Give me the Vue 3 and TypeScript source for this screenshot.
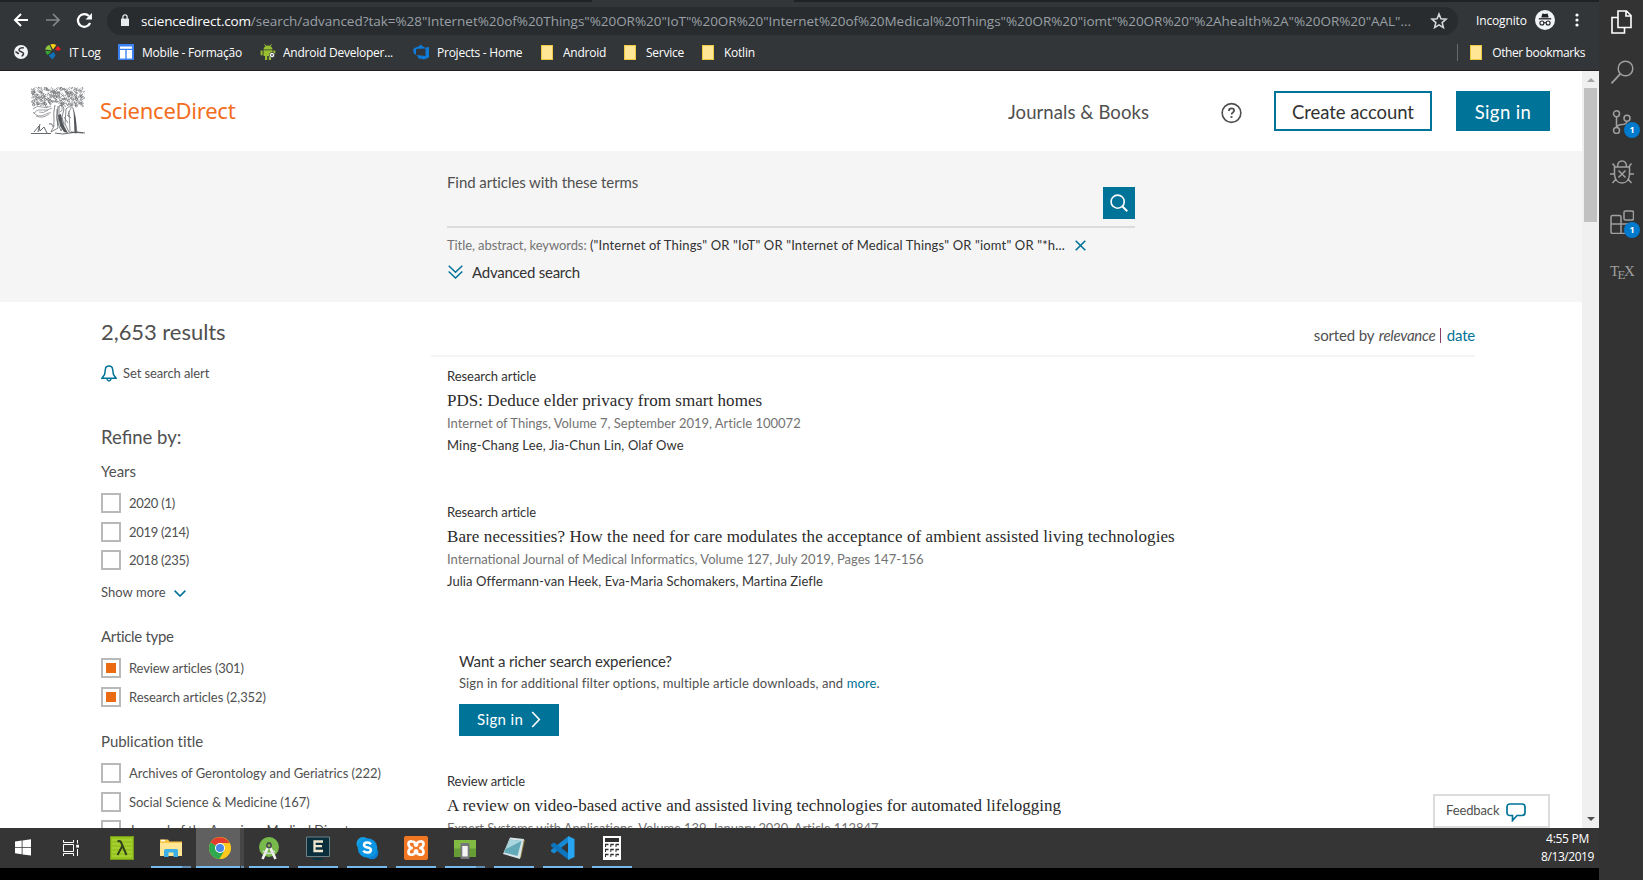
<script setup lang="ts">
interface Tracked { text: string; ls?: number }
interface Result { kind: Tracked; title: Tracked; source: Tracked; authors: Tracked }
interface Facet { title: Tracked; checked: boolean; more: boolean; options: Tracked[] }
interface Task { name: string; state: string }

const track = (ls = 0) => ({ letterSpacing: `${ls}px` })

const bookmarks = [
  { name: 'globe', label: '', cls: 'bm-globe' },
  { name: 'itlog', label: 'IT Log', cls: 'bm-itlog' },
  { name: 'mobile', label: 'Mobile - Formação', cls: 'bm-mobile' },
  { name: 'droid', label: 'Android Developer...', cls: 'bm-droid' },
  { name: 'azure', label: 'Projects - Home', cls: 'bm-azure' },
  { name: 'folder', label: 'Android', cls: 'bm-android' },
  { name: 'folder', label: 'Service', cls: 'bm-service' },
  { name: 'folder', label: 'Kotlin', cls: 'bm-kotlin' },
]

const results: Result[] = [
  {
    kind: { text: 'Research article', ls: -0.05 },
    title: { text: 'PDS: Deduce elder privacy from smart homes', ls: 0.04 },
    source: { text: 'Internet of Things, Volume 7, September 2019, Article 100072', ls: -0.01 },
    authors: { text: 'Ming-Chang Lee, Jia-Chun Lin, Olaf Owe', ls: 0.15 },
  },
  {
    kind: { text: 'Research article', ls: -0.05 },
    title: { text: 'Bare necessities? How the need for care modulates the acceptance of ambient assisted living technologies', ls: 0.09 },
    source: { text: 'International Journal of Medical Informatics, Volume 127, July 2019, Pages 147-156' },
    authors: { text: 'Julia Offermann-van Heek, Eva-Maria Schomakers, Martina Ziefle', ls: 0.07 },
  },
]
const lastResult = {
  kind: { text: 'Review article', ls: -0.1 },
  title: { text: 'A review on video-based active and assisted living technologies for automated lifelogging', ls: 0.02 },
  source: { text: 'Expert Systems with Applications, Volume 139, January 2020, Article 112847', ls: -0.1 },
}

const facets: Facet[] = [
  {
    title: { text: 'Years' }, checked: false, more: true,
    options: [{ text: '2020 (1)', ls: -0.25 }, { text: '2019 (214)', ls: -0.32 }, { text: '2018 (235)', ls: -0.32 }],
  },
  {
    title: { text: 'Article type', ls: -0.32 }, checked: true, more: false,
    options: [{ text: 'Review articles (301)', ls: -0.15 }, { text: 'Research articles (2,352)', ls: -0.08 }],
  },
  {
    title: { text: 'Publication title', ls: -0.04 }, checked: false, more: false,
    options: [
      { text: 'Archives of Gerontology and Geriatrics (222)', ls: -0.03 },
      { text: 'Social Science & Medicine (167)', ls: -0.02 },
      { text: 'Journal of the American Medical Directors', ls: -0.05 },
    ],
  },
]

const tasks: Task[] = [
  { name: 'explorer', state: 'split' },
  { name: 'chrome', state: 'active' },
  { name: 'studio', state: 'open' },
  { name: 'cmder', state: 'open' },
  { name: 'skype', state: 'open' },
  { name: 'xampp', state: 'open' },
  { name: 'genymotion', state: 'split' },
  { name: 'notepad', state: 'open' },
  { name: 'vscode', state: 'open' },
  { name: 'calc', state: 'open' },
]

// Engraved foliage of the publisher's tree: small curls laid out with a fixed seed.
let seed = 11
const rnd = () => {
  seed = (seed * 16807) % 2147483647
  return seed / 2147483647
}
const curls: string[] = []
for (let y = 1.5; y < 19; y += 2.3) {
  for (let x = 1.5; x < 53; x += 2.5) {
    if (y > 16 && x > 20 && x < 27) continue
    const px = x + rnd() * 1.6 - 0.8
    const py = y + rnd() * 1.4 - 0.7
    const r = 0.7 + rnd() * 0.7
    const s = rnd() > 0.5 ? 1 : 0
    curls.push(`M${px.toFixed(1)} ${py.toFixed(1)}a${r.toFixed(1)} ${r.toFixed(1)} 0 1 ${s} ${(rnd() * 1.6).toFixed(1)} ${(rnd() * 1.2).toFixed(1)}`)
  }
}
const foliage = curls.join('')
</script>

<template>
  <div class="screen">
    <div class="desktop">
      <div class="browser">
        <div class="tabstrip"><i class="tab-l"></i><i class="tab-gap"></i></div>
        <div class="toolbar">
          <svg class="nav back" viewBox="0 0 16 16"><path d="M15 8H2M8 2L2 8l6 6" fill="none" stroke="#fff" stroke-width="2" /></svg>
          <svg class="nav fwd" viewBox="0 0 16 16"><path d="M1 8h13M8 2l6 6-6 6" fill="none" stroke="#85888b" stroke-width="1.7" /></svg>
          <svg class="nav reload" viewBox="0 0 16 16"><path d="M13.3 10.4A6 6 0 1 1 12.2 3.8" fill="none" stroke="#fff" stroke-width="2.1" /><path d="M15 1v6H9z" fill="#fff" /></svg>
          <div class="omnibox">
            <svg class="lock" viewBox="0 0 10 12"><path d="M1 4.6h8V12H1z" fill="#e8eaed" /><path d="M2.9 5V3a2.1 2.1 0 0 1 4.2 0v2" fill="none" stroke="#e8eaed" stroke-width="1.3" /></svg>
            <span class="host">sciencedirect.com</span><span class="path">/search/advanced?tak=%28"Internet%20of%20Things"%20OR%20"IoT"%20OR%20"Internet%20of%20Medical%20Things"%20OR%20"iomt"%20OR%20"%2Ahealth%2A"%20OR%20"AAL"...</span>
            <svg class="star" viewBox="0 0 16 16"><path d="M8 1.8l1.7 4.3 4.6.3-3.5 3 1.1 4.5L8 11.4l-3.9 2.5 1.1-4.5-3.5-3 4.6-.3z" fill="none" stroke="#d5d7da" stroke-width="1.4" /></svg>
          </div>
          <span class="incog">Incognito</span>
          <svg class="spy" viewBox="0 0 20 20"><circle cx="10" cy="10" r="10" fill="#f1f3f4" /><path d="M6.3 7.4L7.4 3.6l2.6.5 2.6-.5 1.1 3.8z" fill="#202124" /><path d="M3.8 8.8h12.4" stroke="#202124" stroke-width="1.3" /><circle cx="6.9" cy="13" r="2" fill="none" stroke="#202124" stroke-width="1.1" /><circle cx="13.1" cy="13" r="2" fill="none" stroke="#202124" stroke-width="1.1" /><path d="M8.9 12.7h2.2" stroke="#202124" /></svg>
          <svg class="dots" viewBox="0 0 4 14"><circle cx="2" cy="2" r="1.6" fill="#fff" /><circle cx="2" cy="7" r="1.6" fill="#fff" /><circle cx="2" cy="12" r="1.6" fill="#fff" /></svg>
        </div>
        <div class="bookmarks">
          <div v-for="b in bookmarks" :key="b.cls" class="bm" :class="b.cls">
            <svg v-if="b.name === 'globe'" class="i14" viewBox="0 0 14 14"><circle cx="7" cy="7" r="7" fill="#f1f3f4" /><path d="M9.8 3C7.500 2.300 4.800 3.300 5 5.200c.3 1.800 4.500 1.300 4.500 3.500 0 1.300-1.300 1.500-1.500 2.800M1.500 6.500c1 1 2.300 1.300 3.200 2.500" fill="none" stroke="#35363a" stroke-width="1.6" /></svg>
            <svg v-else-if="b.name === 'itlog'" class="i16" viewBox="0 0 16 16"><path d="M7 6.500L0 5.500A7 7 0 0 1 4.300.800z" fill="#8cc63e" /><path d="M8 5.500L5.300.500a8 8 0 0 1 6 .5z" fill="#fcd116" /><path d="M10 6l2.300-4q2.700 1.300 3.700 3.500l-2.500 1.200z" fill="#e01b22" /><path d="M6.500 7.500L.5 6.800q0 2.500 2 4.300z" fill="#38a832" /><path d="M8.800 8L3.500 11.500 7.500 15.500l3-4z" fill="#1071b8" /></svg>
            <svg v-else-if="b.name === 'mobile'" class="i16" viewBox="0 0 16 16"><path d="M0 0h16v16H0z" fill="#3b82f0" /><path d="M2 2.500h12v2.300H2zM2 6h5.300v8.500H2zM8.700 6H14v8.500H8.700z" fill="#fff" /></svg>
            <svg v-else-if="b.name === 'droid'" class="i16" viewBox="0 0 16 16"><path d="M3.500 5.500a4.500 4 0 0 1 9 0zM3.500 6.300h9V12h-9zM.6 6.500h2v4.800h-2zM13.300 6.500h2v3h-2zM5 12h2.200v4H5zM8.800 12H11v4H8.800z" fill="#97bf30" /><path d="M4.500.3l1.500 2M11.500.3l-1.500 2" stroke="#97bf30" /><circle cx="12" cy="11" r="2.600" fill="#fff" stroke="#333" stroke-width=".7" /><circle cx="12" cy="11" r="1" fill="#555" /></svg>
            <svg v-else-if="b.name === 'azure'" class="i16" viewBox="0 0 16 16"><path d="M0 5.500L1.500 4 7 1.800V.2l6 4.300-8.500.3L3 5.500v5.300L1 10z" fill="#0f7bd8" /><path d="M12.500 3.500L16 3v10.500L11 15.500l-4-1v1.300L3.500 11l9 1z" fill="#0f7bd8" /></svg>
            <i v-else class="folder"></i>
            <span v-if="b.label">{{ b.label }}</span>
          </div>
          <div class="bm other"><i class="folder"></i><span>Other bookmarks</span></div>
        </div>

        <div class="viewport">
          <div class="page">
            <header class="head">
              <svg class="tree" viewBox="0 0 54 48">
                <path :d="foliage" fill="none" stroke="#6c6f73" stroke-width=".7" />
                <path d="M2 22q4-4 9-2t9-1M3 27q2-5 8-4t10-2M2 25q5 6 11 3t7-2M5 29q7 3 13-2M8 25q4 2 9-2" fill="none" stroke="#85888b" stroke-width=".8" />
                <path d="M24 18q-2 8-1 15t-3 12l7-4q-2-9 0-22M26 22q-1 9 1 16" fill="none" stroke="#66696d" stroke-width=".8" />
                <path d="M28 19q4-2 5 3l-2 8 2 8-3 6-3-8 1-9zM35 22q3-4 7-1l2 8 2 17-8-1-4-8z" fill="none" stroke="#66696d" stroke-width=".8" />
                <path d="M27 28l2 11 4 6 4 1-5-9-2-10zM42.500 22l2.500 12 .5 12h-2l-.5-12z" fill="#53565a" />
                <path d="M30 18q3 5-1 7M38 24l1 20M36 28l4 3M33 30l4 6M40 21q-4 5-2 9" fill="none" stroke="#66696d" stroke-width=".7" />
                <path d="M0 46.500h20M24 46q8 2 15 0t15 0M3 45l5-6 1 5 4-4 3 6M7 45l2-8M18 37q4-1 4 3M40 45l12 1" fill="none" stroke="#56595d" stroke-width=".9" />
              </svg>
              <span class="brand">ScienceDirect</span>
              <span class="journals">Journals &amp; Books</span>
              <svg class="help" viewBox="0 0 22 22"><circle cx="11" cy="11" r="9.800" fill="none" stroke="#505050" stroke-width="1.700" /><path d="M8.300 8.800q0-2.600 2.700-2.600t2.700 2.300q0 1.200-1.300 2t-1.300 2.200" fill="none" stroke="#505050" stroke-width="1.900" /><path d="M10 14.200h2v2h-2z" fill="#505050" /></svg>
              <span class="btn create">Create account</span>
              <span class="btn signin">Sign in</span>
            </header>

            <section class="search">
              <div class="query">
                <span class="find">Find articles with these terms</span>
                <span class="go"><svg viewBox="0 0 20 20"><circle cx="8.500" cy="8.500" r="7.300" fill="none" stroke="#fff" stroke-width="1.800" /><path d="M13.600 13.600l5.600 5.600" stroke="#fff" stroke-width="2.200" /></svg></span>
              </div>
              <div class="terms">
                <span class="tak">Title, abstract, keywords:</span><span class="val">("Internet of Things" OR "IoT" OR "Internet of Medical Things" OR "iomt" OR "*h...</span>
                <svg class="clear" viewBox="0 0 11 11"><path d="M.7.700l9.600 9.600M10.300.700L.7 10.300" stroke="#007398" stroke-width="1.600" /></svg>
              </div>
              <div class="adv">
                <svg viewBox="0 0 15 14"><path d="M.7.700l6.800 6.500L14.300.700M.7 6.500l6.800 6.500 6.800-6.500" fill="none" stroke="#007398" stroke-width="1.500" /></svg>
                <span>Advanced search</span>
              </div>
            </section>

            <div class="body">
              <aside class="facets">
                <h1>2,653 results</h1>
                <div class="alert"><svg viewBox="0 0 16 17"><path d="M1 13.200h14L12.400 9.500 11.600 4Q11.200 1 8 1T4.400 4L3.600 9.500z" fill="none" stroke="#007398" stroke-width="1.500" /><path d="M5.800 14.200q2.200 3.600 4.400 0" fill="none" stroke="#007398" stroke-width="1.500" /></svg><span>Set search alert</span></div>
                <h2>Refine by:</h2>
                <div v-for="f in facets" :key="f.title.text" class="facet" :class="{ spaced: f.checked }">
                  <h3 :style="track(f.title.ls)">{{ f.title.text }}</h3>
                  <div v-for="o in f.options" :key="o.text" class="opt">
                    <i class="box" :class="{ on: f.checked }"></i><span :style="track(o.ls)">{{ o.text }}</span>
                  </div>
                  <div v-if="f.more" class="more"><span>Show more</span><svg viewBox="0 0 12 7"><path d="M.6.600L6 6 11.400.600" fill="none" stroke="#007398" stroke-width="1.600" /></svg></div>
                </div>
              </aside>
              <main class="results">
                <div class="sort"><span class="by">sorted by</span><em>relevance</em><span class="bar"></span><a>date</a></div>
                <article v-for="r in results" :key="r.title.text" class="item">
                  <div class="kind" :style="track(r.kind.ls)">{{ r.kind.text }}</div>
                  <div class="title" :style="track(r.title.ls)">{{ r.title.text }}</div>
                  <div class="source" :style="track(r.source.ls)">{{ r.source.text }}</div>
                  <div class="authors" :style="track(r.authors.ls)">{{ r.authors.text }}</div>
                </article>
                <div class="promo">
                  <div class="want">Want a richer search experience?</div>
                  <div class="perks">Sign in for additional filter options, multiple article downloads, and <a>more</a>.</div>
                  <span class="enter">Sign in<svg viewBox="0 0 10 18"><path d="M1 1l7.500 8L1 17" fill="none" stroke="#fff" stroke-width="1.700" /></svg></span>
                </div>
                <article class="item">
                  <div class="kind" :style="track(lastResult.kind.ls)">{{ lastResult.kind.text }}</div>
                  <div class="title" :style="track(lastResult.title.ls)">{{ lastResult.title.text }}</div>
                  <div class="source" :style="track(lastResult.source.ls)">{{ lastResult.source.text }}</div>
                </article>
              </main>
            </div>
            <div class="feedback"><span>Feedback</span><svg viewBox="0 0 20 19"><path d="M4 1h12q3 0 3 3v5.500q0 3-3 3h-5L6.500 17.500V12.500H4q-3 0-3-3V4q0-3 3-3z" fill="none" stroke="#007398" stroke-width="1.700" /></svg></div>
          </div>
          <div class="scroll"><i class="up"></i><i class="thumb"></i><i class="down"></i></div>
        </div>
      </div>

      <div class="taskbar">
        <div class="start"><svg viewBox="0 0 16 17"><path d="M0 2.500l6.700-1V8H0zM7.500 1.400L16 .2V8H7.500zM0 8.800h6.700v6.500l-6.700-1zM7.500 8.800H16v7.800l-8.500-1.200z" fill="#fff" /></svg></div>
        <div class="view"><svg viewBox="0 0 16 16"><path d="M.5 0v2.500h10V0M.5 16v-2.500h10V16M.5 4.500h10v7H.5zM14.500 0v3.500M14.500 9v7" fill="none" stroke="#fff" /><path d="M13.200 4.800h2.800v2.800h-2.800z" fill="#fff" /></svg></div>
        <div class="lambda"><svg viewBox="0 0 24 24"><path d="M0 0h24v24H0z" fill="#73981c" /><path d="M1 1h22v22H1z" fill="#97c51d" /><path d="M2 4h20M2 8h20M2 12h20M2 16h20M2 20h20" stroke="#b4d84c" /><path d="M7.500 5.500q3-1.500 4 2l5 11.500M12.300 10L7.500 19" fill="none" stroke="#33401c" stroke-width="2" /></svg></div>
        <div v-for="t in tasks" :key="t.name" class="task" :class="[t.state, t.name]">
          <svg v-if="t.name === 'explorer'" viewBox="0 0 24 24"><path d="M1 3.500h8l1.500 2H23V20H1z" fill="#f5c84c" /><path d="M1 7h22v13H1z" fill="#ffe694" /><path d="M2 4.500h4" stroke="#fff" stroke-width="1.500" /><path d="M5 21v-6.500q0-1.500 1.500-1.500h11q1.500 0 1.500 1.500V21h-4.500v-4.500h-5V21z" fill="#3bb1e8" /></svg>
          <svg v-else-if="t.name === 'chrome'" viewBox="0 0 24 24"><circle cx="12" cy="12" r="11" fill="#fbc116" /><path d="M12 12L2.500 6.500a11 11 0 0 1 19 .5H12z" fill="#e33b2e" /><path d="M12 12L2.500 6.500a11 11 0 0 0 9 16.500l5-8.500z" fill="#2da94f" /><path d="M12 7h9.500a11 11 0 0 1-10 16l5-8.500z" fill="#fdc81f" /><circle cx="12" cy="12" r="5" fill="#fff" /><circle cx="12" cy="12" r="4" fill="#4a86e8" /></svg>
          <svg v-else-if="t.name === 'studio'" viewBox="0 0 24 24"><circle cx="12" cy="11" r="10" fill="#78b94b" /><path d="M12 6v4" stroke="#405c32" stroke-width="3" /><path d="M11 11L5.500 23M13 11l5.500 12" stroke="#f1f1f1" stroke-width="2.600" /><path d="M6 15q6 5 12 0" fill="none" stroke="#dcdcdc" stroke-width="1.600" /><circle cx="12" cy="9.500" r="3" fill="#4c4f50" /><circle cx="12" cy="9.500" r="1.300" fill="#8bc34a" /></svg>
          <svg v-else-if="t.name === 'cmder'" viewBox="0 0 24 24"><path d="M.5 1h23v19.500H.5z" fill="#0b2e3d" stroke="#688087" /><path d="M17 5.500H8.500v9.500H17M8.500 10.200H16" fill="none" stroke="#eee6cf" stroke-width="2.300" /><path d="M7 23h10" stroke="#0a3542" stroke-width="2" /></svg>
          <svg v-else-if="t.name === 'skype'" viewBox="0 0 24 24"><circle cx="8" cy="7.500" r="6.500" fill="#159fe4" /><circle cx="17" cy="17" r="6.300" fill="#0b7fd3" /><circle cx="12.500" cy="12" r="9.800" fill="#0b95e2" /><path d="M16 8.300q-1.500-2-4-1.800-3 .2-3 2.500 0 1.800 3.500 2.500t3.400 2.600q-.2 2.600-3.600 2.500-2.700 0-4-2" fill="none" stroke="#fff" stroke-width="2.500" /></svg>
          <svg v-else-if="t.name === 'xampp'" viewBox="0 0 24 24"><rect width="24" height="24" rx="2" fill="#f37623" /><path d="M8 5.500Q4.500 5 4.500 8t3.300 4q-3.300 1-3.300 4t3.500 2.700 3-3.700q1-1 2 0-.5 3.500 3 3.700t3.500-2.700-3.300-4q3.300-1 3.300-4t-3.500-2.500-3 3.500q-1 1-2 0 .5-3.500-3-3.500z" fill="none" stroke="#fff" stroke-width="2.700" stroke-linejoin="round" /></svg>
          <svg v-else-if="t.name === 'genymotion'" viewBox="0 0 24 24"><path d="M1 4h22v17H1z" fill="#679d35" /><path d="M1 4h22v8.500H1z" fill="#82bb42" /><rect x="7.500" y="7" width="9" height="16" rx="1" fill="#76777a" /><path d="M9.300 10h5.400v10.500H9.300z" fill="#f4f4f4" /></svg>
          <svg v-else-if="t.name === 'notepad'" viewBox="0 0 24 24"><path d="M20 3l3 1-4 18-4-1z" fill="#8a7135" /><path d="M8 1.500l14 1.500-4 20L1 18z" fill="#d7e5e8" /><path d="M8 3.500L19.500 5 15.500 20 2 16.500z" fill="#63aab8" /><path d="M8 3.500L19.500 5 4 13z" fill="#a9d6df" /></svg>
          <svg v-else-if="t.name === 'vscode'" viewBox="0 0 24 24"><path d="M17 .5V6.500L3 17.500 0 15.500V14z" fill="#1788d2" /><path d="M17 23.500V17L3 6.500 0 8.500V10z" fill="#0c75bd" /><path d="M17 0l6.500 3v18L17 24z" fill="#27a4f2" /></svg>
          <svg v-else viewBox="0 0 24 24"><path d="M3 0h18v24H3z" fill="#fff" /><path d="M5 2h14v4H5z" fill="#2e2e2e" /><path d="M5 8.500h3.500M10.300 8.500h3.500M15.500 8.500H19M5 13.500h3.500M10.300 13.500h3.500M15.500 13.500H19M5 18.500h3.500M10.300 18.500h3.500M15.500 18.500H19" stroke="#2e2e2e" stroke-width="1.500" /><path d="M5.500 9v2M10.800 9v2M16 9v2M5.500 14v2M10.800 14v2M16 14v2M5.500 19v2M10.800 19v2M16 19v2" stroke="#2e2e2e" /></svg>
        </div>
        <div class="clock"><span class="time">4:55 PM</span><span class="day">8/13/2019</span></div>
      </div>
    </div>

    <nav class="activity">
      <div class="act files"><svg viewBox="0 0 24 24"><path d="M8 1h8.500l4.500 4.500v12H8zM16 1v5h5" fill="none" stroke="#fff" stroke-width="1.600" /><path d="M8 7.500H2V23h12.500v-5.500" fill="none" stroke="#fff" stroke-width="1.600" /></svg></div>
      <div class="act"><svg viewBox="0 0 24 24"><circle cx="15.500" cy="8.500" r="7.300" fill="none" stroke="#a0a0a0" stroke-width="1.500" /><path d="M10.300 13.800L1.500 23.300" stroke="#a0a0a0" stroke-width="1.800" /></svg></div>
      <div class="act"><svg viewBox="0 0 24 24"><g fill="none" stroke="#a0a0a0" stroke-width="1.500"><circle cx="6.500" cy="3.800" r="3" /><circle cx="6.500" cy="20.500" r="3" /><circle cx="17" cy="8.300" r="3" /><path d="M6.500 6.800v10.700M17 11.300q-.5 3-5 3.300t-5.500 3" /></g></svg><b>1</b></div>
      <div class="act"><svg viewBox="0 0 24 24"><g fill="none" stroke="#a0a0a0" stroke-width="1.500"><path d="M4.500 7h15v8q-1 8-7.500 8t-7.500-8zM7.500 7q0-6 4.500-6t4.500 6M8.500 10.500l7 7M15.500 10.500l-7 7M2.500 3.500L5 6.500M21.500 3.500L19 6.500M0 14h4.500M19.500 14H24M2.500 23l3.500-4M21.500 23L18 19" /></g></svg></div>
      <div class="act"><svg viewBox="0 0 24 24"><g fill="none" stroke="#a0a0a0" stroke-width="1.500"><path d="M2.500 5.500h7q1.500 0 1.500 1.500v16.500H2.500q-1.500 0-1.500-1.500V7q0-1.500 1.500-1.500zM1 14h17q1.500 0 1.500 1.500v8H11" /><rect x="14" y="1" width="9.500" height="9" rx="1.500" /></g></svg><b>1</b></div>
      <div class="act tex"><span>T<small>E</small>X</span></div>
    </nav>
  </div>
</template>

<style>
html, body { margin: 0; background: #000; overflow: hidden; }
</style>

<style scoped>
* { box-sizing: border-box; }
.screen { display: flex; width: 1643px; height: 880px; overflow: hidden; background: #000; font-family: Lato, "Open Sans", sans-serif; white-space: nowrap; }
svg { display: block; flex: none; }
i, em { flex: none; }
.desktop { width: 1599px; display: flex; flex-direction: column; }
.browser { height: 828px; display: flex; flex-direction: column; background: #323639; font-family: "Open Sans", sans-serif; }
.tabstrip { height: 2px; flex: none; display: flex; background: #202124; }
.tab-l { width: 592px; }
.tab-gap { width: 202px; background: #323639; }
.toolbar { height: 36px; flex: none; display: flex; align-items: center; padding-left: 13px; }
.nav { width: 16px; height: 16px; }
.fwd { margin-left: 16px; }
.reload { margin-left: 15px; width: 17px; height: 17px; }
.omnibox { margin: 1px 0 0 14px; width: 1351px; height: 28px; border-radius: 14px; background: #282c2f; display: flex; align-items: center; padding-left: 13px; font-size: 13.5px; color: #9aa0a6; }
.lock { width: 10px; height: 12px; margin: -2px 11px 0 0; }
.host { color: #fff; letter-spacing: -0.18px; }
.path { letter-spacing: -0.03px; }
.star { width: 18px; height: 18px; margin-left: auto; margin-right: 10px; }
.incog { margin-left: 18px; font-size: 12px; color: #fff; letter-spacing: -0.14px; width: 59px; }
.spy { width: 20px; height: 20px; }
.dots { width: 4px; height: 14px; margin-left: 20px; }
.bookmarks { height: 33px; flex: none; display: flex; align-items: center; padding: 0 14px 4px 13px; color: #fff; font-size: 12px; line-height: 16px; letter-spacing: -0.24px; border-bottom: 1px solid #231f20; }
.bm { display: flex; align-items: center; flex: none; }
.bm span { margin-top: 1px; }
.i14 { width: 14px; height: 14px; margin-left: 1px; }
.i16 { width: 16px; height: 16px; }
.bm-globe { width: 32px; }
.bm-itlog { width: 73px; gap: 8px; }
.bm-mobile { width: 142px; gap: 8px; }
.bm-droid { width: 153px; gap: 7px; }
.bm-azure { width: 128px; gap: 8px; }
.bm-android { width: 83px; gap: 10px; }
.bm-service { width: 78px; gap: 10px; }
.bm-kotlin { gap: 10px; }
.folder { width: 12px; height: 15px; background: #ffe694; border: 1px solid #efc846; }
.other { margin-left: auto; gap: 10px; letter-spacing: -0.38px; border-left: 1px solid #686b6e; padding-left: 12px; }
.viewport { flex: 1; min-height: 0; display: flex; background: #fff; }
.page { position: relative; width: 1582px; overflow: hidden; font-family: Lato, sans-serif; color: #505050; font-size: 13px; line-height: 20px; }
.scroll { width: 17px; background: #f0f0f0; display: flex; flex-direction: column; align-items: center; }
.up { border: 4px solid transparent; border-top: 0; border-bottom: 4px solid #a3a3a3; margin-top: 7px; }
.thumb { width: 13px; height: 134px; background: #c1c1c1; margin-top: 6px; }
.down { border: 4px solid transparent; border-bottom: 0; border-top: 4px solid #505050; margin: auto 0 7px; }

.head { height: 80px; display: flex; align-items: center; padding-left: 31px; font-size: 18.5px; line-height: 24px; }
.tree { width: 54px; height: 48px; }
.brand { margin: -3px 0 0 15px; width: 906px; font: 22px/30px "Noto Sans", sans-serif; letter-spacing: -0.25px; color: #f36d21; }
.journals { letter-spacing: 0.08px; width: 213px; margin: 1px 0 0 2px; }
.help { width: 21px; height: 22px; margin-top: 3px; }
.btn { height: 40px; text-align: center; }
.create { margin-left: 32px; width: 158px; border: 2px solid #007398; line-height: 38px; color: #323232; letter-spacing: -0.06px; }
.signin { margin-left: 24px; width: 94px; background: #007398; color: #fff; line-height: 42px; letter-spacing: 0.4px; }

.search { height: 151px; background: #f5f5f5; padding: 21px 0 0 447px; }
.query { width: 688px; height: 56px; border-bottom: 2px solid #dcdcdc; display: flex; justify-content: space-between; }
.find { font-size: 15px; letter-spacing: -0.08px; }
.go { width: 32px; height: 32px; margin-top: 15px; background: #007398; display: grid; place-items: center; }
.go svg { width: 18px; height: 18px; }
.terms { display: flex; align-items: center; margin-top: 7px; height: 20px; color: #323232; }
.tak { width: 143px; color: #737373; letter-spacing: -0.08px; }
.val { width: 485px; letter-spacing: 0.15px; }
.clear { width: 11px; height: 11px; }
.adv { display: flex; align-items: center; height: 20px; margin-top: 7px; padding-left: 1px; gap: 9px; font-size: 15px; letter-spacing: -0.25px; color: #323232; }
.adv span { margin-top: -1px; }
.adv svg { width: 15px; height: 14px; }

.body { display: flex; height: 526px; }
.facets { width: 330px; margin-left: 101px; padding-top: 16px; }
h1, h2, h3 { margin: 0; font-weight: 400; }
h1 { font-size: 22px; line-height: 28px; letter-spacing: -0.05px; }
.alert { display: flex; align-items: center; margin-top: 17px; height: 20px; gap: 6px; letter-spacing: -0.1px; }
.alert svg { width: 16px; height: 17px; }
h2 { margin-top: 42px; font-size: 18.5px; line-height: 24px; }
h3 { font-size: 15px; line-height: 20px; }
.facet { margin-top: 12px; }
.facet + .facet { margin-top: 16px; }
.facet + .facet.spaced { margin-top: 24px; }
.facet h3 { margin-bottom: 12px; }
.opt { display: flex; height: 28.5px; gap: 8px; }
.box { width: 20px; height: 20px; border: 2px solid #b9b9b9; background: #fff; }
.box.on { background: #eb6b12; box-shadow: inset 0 0 0 3px #fff; }
.more { display: flex; align-items: center; gap: 8px; margin-top: 3.5px; height: 20px; letter-spacing: 0.05px; }
.more svg { width: 12px; height: 7px; margin-top: 2px; }

.results { width: 1044px; padding-left: 16px; }
.sort { height: 55px; margin-left: -16px; margin-bottom: 9px; border-bottom: 2px solid #f5f5f5; display: flex; justify-content: flex-end; padding-top: 23px; font-size: 15px; }
.by { letter-spacing: -0.14px; width: 65px; }
em { letter-spacing: -0.25px; width: 56px; }
.bar { width: 1px; height: 15px; margin: 3px 6px 0 5px; background: #8d3d6b; }
.sort a { color: #007398; letter-spacing: -0.2px; }
.item { height: 136px; }
.kind, .authors { color: #323232; }
.title { font: 17px/24px "Liberation Serif", serif; color: #2a2a2a; margin-top: 3px; }
.source { color: #737373; }
.authors { margin-top: 2px; }
.promo { height: 133px; padding: 13px 0 0 12px; }
.want { font-size: 15px; letter-spacing: -0.13px; color: #323232; }
.perks { margin-top: 2px; letter-spacing: 0.12px; }
.perks a { color: #007398; }
.enter { display: flex; align-items: center; width: 100px; height: 32px; margin-top: 11px; padding: 0 0 3px 18px; gap: 8px; background: #007398; color: #fff; font-size: 15px; letter-spacing: 0.37px; }
.enter svg { width: 10px; height: 17px; margin-top: 2px; }
/* pinned over the page's lower right corner */
.feedback { position: absolute; right: 32px; bottom: 0; width: 117px; height: 34px; border: 2px solid #dcdcdc; background: #fff; display: flex; align-items: center; padding: 0 0 3px 11px; gap: 7px; letter-spacing: -0.12px; }
.feedback svg { width: 20px; height: 19px; margin-top: 5px; }

.taskbar { height: 40px; flex: none; display: flex; background: #353535; color: #fff; font-family: "Open Sans", sans-serif; }
.start { width: 48px; padding: 11px 0 0 15px; }
.start svg { width: 16px; height: 17px; }
.view { width: 47px; padding: 12px 0 0 15px; }
.view svg { width: 16px; height: 16px; }
.lambda { width: 53px; padding: 8px 0 0 15px; }
.lambda svg, .task svg { width: 24px; height: 24px; }
.task { width: 49px; height: 40px; padding: 8px 0 0 11px; display: flex; flex-wrap: wrap; }
.task::before { content: ''; order: 2; height: 2px; background: #76b9ed; width: 40px; margin: 6px 0 0 -8px; }
.task svg { margin-right: 10px; }
.task.explorer { width: 48px; }
.task.split::before { background: linear-gradient(90deg, #76b9ed 31px, #5f8cb0 31px); }
.task.active { width: 48px; padding-left: 12px; margin-right: 2px; background: linear-gradient(90deg, #606060 44px, #464646 44px); }
.task.active::before { width: 48px; margin-left: -12px; background: linear-gradient(90deg, #76b9ed 44px, #353535 44px, #353535 45px, #5f8cb0 45px); }
.clock { margin-left: auto; width: 63px; display: flex; flex-direction: column; align-items: center; font-size: 12px; line-height: 18px; padding: 2px 0 0; }
.time { letter-spacing: -0.3px; }
.day { letter-spacing: -0.45px; }

.activity { width: 44px; height: 880px; background: #333; padding-top: 10px; }
.act { position: relative; height: 50px; padding-left: 11px; }
.act svg { width: 24px; height: 24px; }
/* count badge overlapping the icon's lower right corner */
.act b { position: absolute; left: 25px; top: 12px; width: 16px; height: 16px; border-radius: 50%; background: #007acc; color: #fff; font: 700 9px/16px "Open Sans", sans-serif; text-align: center; }
.tex { font: 15px/22px "Liberation Serif", serif; color: #a0a0a0; letter-spacing: -1.6px; }
.tex small { font-size: 13px; position: relative; top: 3px; }
</style>
